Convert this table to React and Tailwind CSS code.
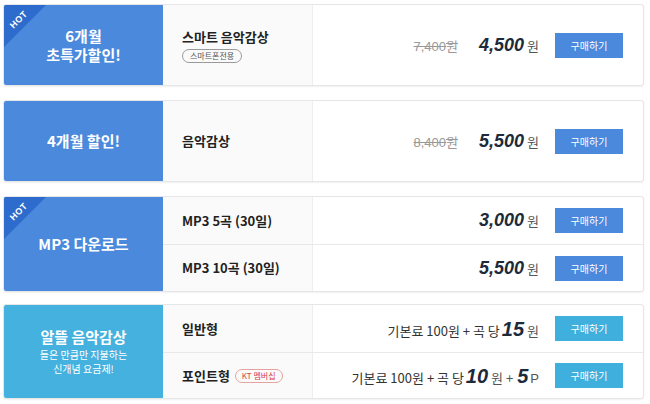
const kr = { fontFamily: '"Noto Sans CJK KR", "Noto Sans", sans-serif' };
const num = { fontFamily: '"Liberation Sans", Arial, sans-serif' };

const HotRibbon = () => (
  <div className="absolute left-0 top-0 w-[42px] h-[42px]">
    <svg width="42" height="42" className="absolute left-0 top-0">
      <polygon points="0,0 42,0 0,42" fill="#2d6bcc" />
    </svg>
    <span
      className="absolute left-[15px] top-[15px] -translate-x-1/2 -translate-y-1/2 -rotate-45 text-[9px] font-bold text-white leading-none tracking-[0.5px]"
      style={num}
    >
      HOT
    </span>
  </div>
);

const BuyButton = ({ light }) => (
  <button
    className={`w-[68px] h-[25px] text-[10px] text-white ${light ? "bg-[#3fb0dd]" : "bg-[#4a89dc]"}`}
    style={kr}
  >
    구매하기
  </button>
);

const Price = ({ value, old }) => (
  <div className="flex items-baseline">
    {old && (
      <span className="text-[13px] text-[#999] line-through mr-[21px]" style={num}>
        {old}
        <span style={kr}>원</span>
      </span>
    )}
    <span className="text-[18px] font-bold italic text-[#1d2a3a]" style={num}>
      {value}
    </span>
    <span className="text-[13px] text-[#555] ml-[3px]" style={kr}>
      원
    </span>
  </div>
);

const Row = ({ name, badge, badgeRed, price, height, border, light }) => (
  <div className={`flex ${border ? "border-b border-[#e8e8e8]" : ""}`} style={{ height }}>
    <div className="w-[150px] bg-[#fafafa] border-r border-[#eeeeee] pl-[19px] flex flex-col justify-center">
      <div className="flex items-center gap-[5px]">
        <span className="text-[13px] font-bold text-[#222]" style={kr}>
          {name}
        </span>
        {badgeRed && (
          <span
            className="text-[8px] leading-none text-[#d9443f] border border-[#e6a2a0] rounded-full px-[6px] py-[2px]"
            style={kr}
          >
            KT 멤버십
          </span>
        )}
      </div>
      {badge && (
        <span
          className="self-start mt-[3px] text-[8px] leading-none text-[#555] border border-[#9a9a9a] rounded-full px-[7px] py-[2px]"
          style={kr}
        >
          {badge}
        </span>
      )}
    </div>
    <div className="flex-1 flex items-center justify-end pr-[20px] gap-[16px]">
      {price}
      <BuyButton light={light} />
    </div>
  </div>
);

const Card = ({ left, hot, light, rows, mb }) => (
  <div
    className={`flex border border-[#e6e6e6] rounded-[3px] overflow-hidden bg-white shadow-[0_1px_2px_rgba(0,0,0,0.06)] ${mb}`}
  >
    <div
      className={`relative w-[159px] flex flex-col items-center justify-center text-white ${light ? "bg-[#45b1de]" : "bg-[#4a89dc]"}`}
    >
      {hot && <HotRibbon />}
      {left}
    </div>
    <div className="flex-1 flex flex-col">{rows}</div>
  </div>
);

export default function App() {
  return (
    <div className="w-[650px] h-[404px] bg-white pl-[3px] pr-[6px] pt-[4px]" style={kr}>
      <Card
        hot
        mb="mb-[14px]"
        left={
          <div className="text-center text-[15px] font-bold leading-[19px]">
            <div>6개월</div>
            <div>초특가할인!</div>
          </div>
        }
        rows={
          <Row
            name="스마트 음악감상"
            badge="스마트폰전용"
            height={80}
            price={<Price old="7,400" value="4,500" />}
          />
        }
      />
      <Card
        mb="mb-[14px]"
        left={<div className="text-[15px] font-bold">4개월 할인!</div>}
        rows={<Row name="음악감상" height={80} price={<Price old="8,400" value="5,500" />} />}
      />
      <Card
        hot
        mb="mb-[12px]"
        left={<div className="text-[15px] font-bold">MP3 다운로드</div>}
        rows={
          <>
            <Row name="MP3 5곡 (30일)" height={48} border price={<Price value="3,000" />} />
            <Row name="MP3 10곡 (30일)" height={46} price={<Price value="5,500" />} />
          </>
        }
      />
      <Card
        light
        left={
          <div className="text-center">
            <div className="text-[15px] font-bold leading-[20px]">알뜰 음악감상</div>
            <div className="text-[10px] leading-[14px] mt-[1px]">들은 만큼만 지불하는</div>
            <div className="text-[10px] leading-[14px]">신개념 요금제!</div>
          </div>
        }
        rows={
          <>
            <Row
              name="일반형"
              height={48}
              border
              light
              price={
                <div className="flex items-baseline text-[13px] text-[#333]">
                  <span>기본료 100원 + 곡 당</span>
                  <span className="text-[20px] font-bold italic text-[#1d2a3a] ml-[2px]" style={num}>
                    15
                  </span>
                  <span className="ml-[3px] text-[#555]">원</span>
                </div>
              }
            />
            <Row
              name="포인트형"
              badgeRed
              height={45}
              light
              price={
                <div className="flex items-baseline text-[13px] text-[#333]">
                  <span>기본료 100원 + 곡 당</span>
                  <span className="text-[20px] font-bold italic text-[#1d2a3a] ml-[2px]" style={num}>
                    10
                  </span>
                  <span className="ml-[3px] text-[#555]">원 +</span>
                  <span className="text-[20px] font-bold italic text-[#1d2a3a] ml-[4px]" style={num}>
                    5
                  </span>
                  <span className="ml-[2px] text-[#555]" style={num}>
                    P
                  </span>
                </div>
              }
            />
          </>
        }
      />
    </div>
  );
}
